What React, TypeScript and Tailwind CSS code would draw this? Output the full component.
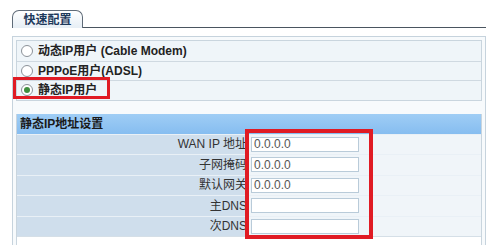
import React from "react";

const font = { fontFamily: '"Liberation Sans", "Noto Sans CJK SC", sans-serif' };

function Radio({ checked }: { checked?: boolean }) {
  return (
    <span className="flex h-[12px] w-[12px] shrink-0 items-center justify-center rounded-full border border-[#8c9299] bg-white">
      {checked && <span className="h-[6px] w-[6px] rounded-full bg-[#3f8f3f]" />}
    </span>
  );
}

const modes = [
  { label: "动态IP用户 (Cable Modem)" },
  { label: "PPPoE用户(ADSL)" },
  { label: "静态IP用户", checked: true },
];

const fields = [
  { label: "WAN IP 地址", value: "0.0.0.0" },
  { label: "子网掩码", value: "0.0.0.0" },
  { label: "默认网关", value: "0.0.0.0" },
  { label: "主DNS", value: "" },
  { label: "次DNS", value: "" },
];

export default function App() {
  return (
    <div className="relative h-[245px] w-[500px] overflow-hidden bg-white pl-[12px] pt-[10px]" style={font}>
      {/* tab strip */}
      <div className="flex w-[474px] items-end">
        <div className="flex h-[18px] w-[71px] items-center justify-center rounded-t-[7px] border border-b-0 border-[#5f6b78] bg-gradient-to-b from-white to-[#e6eef5] text-[12px] font-bold text-[#1e3a5c]">
          快速配置
        </div>
        <div className="flex-1 border-b border-[#4a5560]" />
      </div>

      {/* panel */}
      <div className="mt-[8px] h-[220px] w-[474px] border border-[#c6d3dd] bg-[#f7fafc] p-[3px]">
        <div className="border border-[#c9d5de] bg-[#eff5f9]">
          {modes.map((m, i) => (
            <div
              key={i}
              className={`flex h-[19.5px] items-center gap-[5px] pl-[4px] text-[12px] font-bold text-[#222] ${i > 0 ? "border-t border-[#cfd9e1]" : ""}`}
            >
              <Radio checked={m.checked} />
              <span>{m.label}</span>
            </div>
          ))}
        </div>

        <div className="mt-[13px] border-x border-[#c9d5de]">
          <div className="flex h-[20px] items-center bg-gradient-to-b from-[#9fcdf5] to-[#86bdf0] pl-[3px] text-[12px] font-bold text-[#1a1a1a]">
            静态IP地址设置
          </div>
          {fields.map((f, i) => (
            <div key={i} className="flex h-[20.5px] border-t border-[#e9f0f6]">
              <div className="flex w-[231px] items-center justify-end bg-[#cfdeec] pr-[1px] text-[12px] text-[#333]">
                {f.label}
              </div>
              <div className="flex flex-1 items-center bg-[#f0f5f9] pl-[3px]">
                <div className="flex h-[15px] w-[108px] items-center border border-[#b9cbd9] bg-white pl-[2px] text-[12px] text-[#555]">
                  {f.value}
                </div>
              </div>
            </div>
          ))}
          <div className="h-[20px] border-t border-[#d5dfe7] bg-white" />
        </div>
      </div>

      {/* highlight boxes */}
      <div className="absolute left-[13px] top-[77px] h-[22px] w-[97px] border-[3px] border-[#e01b24]" />
      <div className="absolute left-[245px] top-[129px] h-[110px] w-[128px] border-[4px] border-[#e01b24]" />
    </div>
  );
}
